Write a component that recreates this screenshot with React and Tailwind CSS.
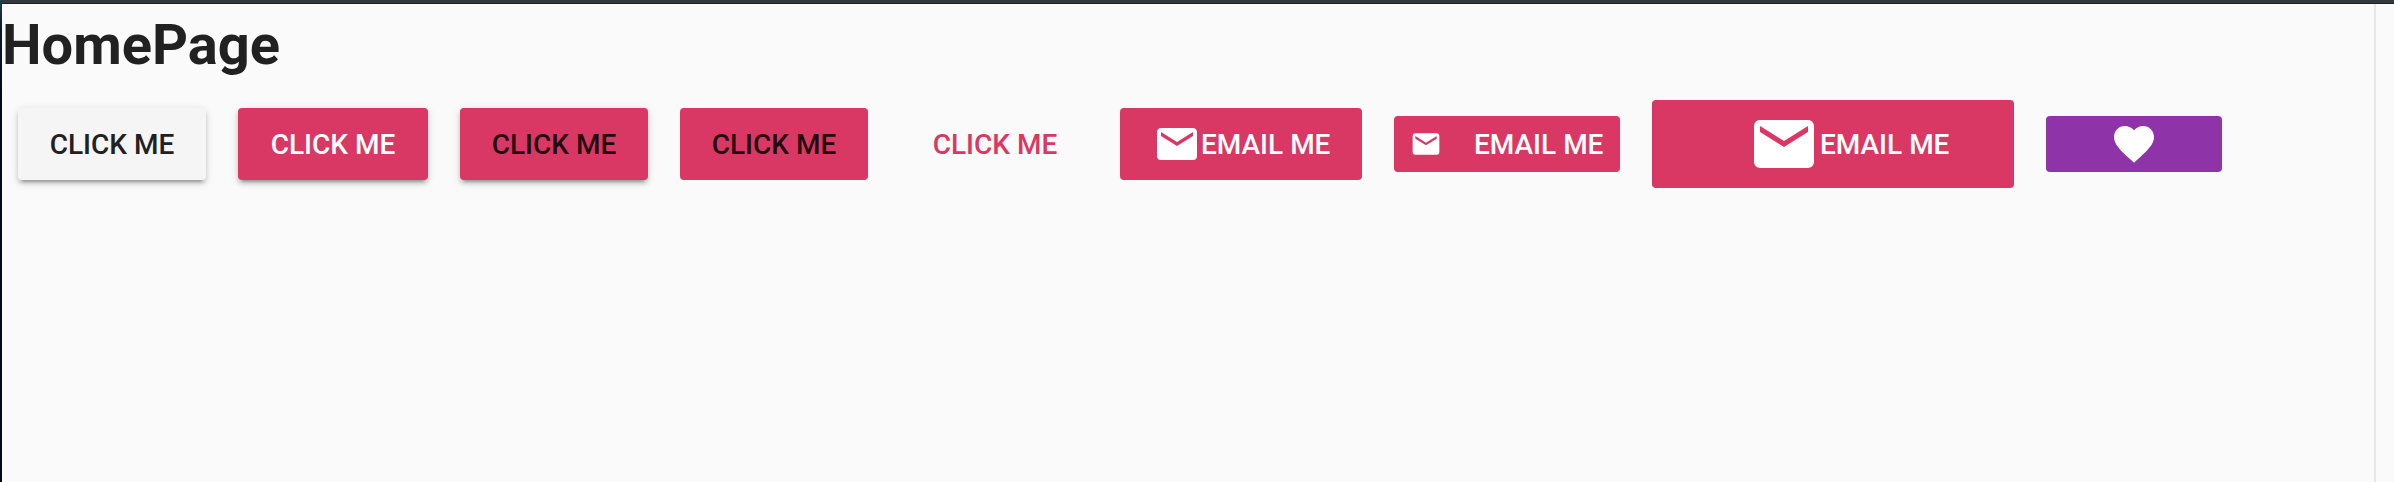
import React from 'react';

const EMAIL = 'M20,8L12,13L4,8V6L12,11L20,6M20,4H4C2.89,4 2,4.89 2,6V18A2,2 0 0,0 4,20H20A2,2 0 0,0 22,18V6C22,4.89 21.1,4 20,4Z';
const HEART = 'M12,21.35L10.55,20.03C5.4,15.36 2,12.27 2,8.5C2,5.41 4.42,3 7.5,3C9.24,3 10.91,3.81 12,5.08C13.09,3.81 14.76,3 16.5,3C19.58,3 22,5.41 22,8.5C22,12.27 18.6,15.36 13.45,20.03L12,21.35Z';

const RAISED = 'shadow-[0_6px_2px_-4px_rgba(0,0,0,0.2),0_4px_4px_0_rgba(0,0,0,0.14),0_2px_10px_0_rgba(0,0,0,0.12)]';

function Icon({ path, className }) {
    return (
        <svg viewBox="0 0 24 24" fill="currentColor" className={`shrink-0 ${className}`}>
            <path d={path} />
        </svg>
    );
}

function Btn({ icon, iconClass, label, className }) {
    return (
        <button className={`flex shrink-0 items-center rounded-[4px] text-[28px] leading-none font-medium whitespace-nowrap ${className}`}>
            {icon && <Icon path={icon} className={iconClass} />}
            {label && <span className="pt-0.5">{label}</span>}
        </button>
    );
}

export default function App() {
    return (
        <div className="flex h-[482px] w-[2394px] overflow-hidden bg-[#fafafa] font-['Roboto',sans-serif] text-[#212121]">
            <div className="w-0.5 shrink-0 bg-linear-to-b from-[#1c4150] from-0% via-[#0c1a2c] via-6% to-[#050818] to-20%" />
            <div className="flex flex-1 flex-col">
                <div className="h-1 shrink-0 border-b border-[#1f2225] bg-[#33383c]" />
                <div className="flex w-[2374px] flex-1 flex-col border-r-2 border-[#e7e7e7]">
                    <h1 className="h-[84px] text-[56px] leading-[82px] font-bold">HomePage</h1>
                    <div className="mt-3 flex h-[88px] items-center gap-8 pl-4">
                        <Btn label="CLICK ME" className={`h-[72px] w-[188px] justify-center bg-[#f5f5f5] ${RAISED}`} />
                        <Btn label="CLICK ME" className={`h-[72px] w-[190px] justify-center bg-[#da3864] text-white ${RAISED}`} />
                        <Btn label="CLICK ME" className={`h-[72px] w-[188px] justify-center bg-[#da3864] text-black/87 ${RAISED}`} />
                        <Btn label="CLICK ME" className="h-[72px] w-[188px] justify-center bg-[#da3864] text-black/87" />
                        <Btn label="CLICK ME" className="h-[72px] w-[188px] justify-center pl-0.5 text-[#da3864]" />
                        <Btn icon={EMAIL} iconClass="size-12" label="EMAIL ME" className="h-[72px] w-[242px] bg-[#da3864] pl-[33px] text-white" />
                        <Btn icon={EMAIL} iconClass="mr-8 size-8" label="EMAIL ME" className="h-14 w-[226px] bg-[#da3864] pl-4 text-white" />
                        <Btn icon={EMAIL} iconClass="size-18" label="EMAIL ME" className="h-[88px] w-[362px] bg-[#da3864] pl-24 text-white" />
                        <Btn icon={HEART} iconClass="size-12" className="h-14 w-[176px] justify-center bg-[#8e34a8] text-white" />
                    </div>
                </div>
            </div>
        </div>
    );
}
